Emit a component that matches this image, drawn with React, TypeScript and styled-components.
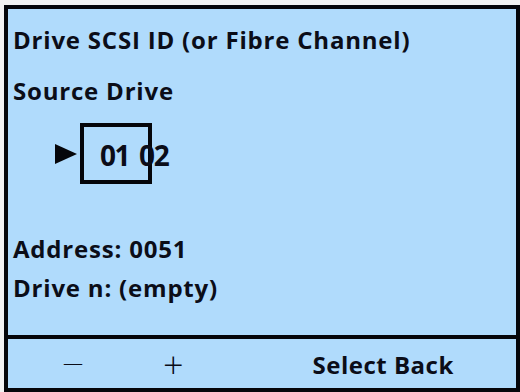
import styled, { createGlobalStyle } from 'styled-components';

const GlobalStyle = createGlobalStyle`
  html, body {
    margin: 0;
    padding: 0;
    background: #f2f2f2;
  }
  body {
    font-family: "Open Sans", Lato, sans-serif;
    color: #0b0d18;
  }
`;

const Screen = styled.div`
  margin: 5px 0 0 4px;
  width: 516px;
  height: 387px;
  box-sizing: border-box;
  border: 4px solid #05060a;
  background: #b0dbfc;
  display: flex;
  flex-direction: column;
`;

const Content = styled.div`
  flex: 1;
  padding: 17px 0 0 5px;
  display: flex;
  flex-direction: column;
  align-items: flex-start;
`;

const Line = styled.div<{ gap?: number }>`
  font-size: 24px;
  font-weight: 700;
  line-height: 28px;
  height: 28px;
  margin-top: ${({ gap }) => gap ?? 0}px;
  white-space: nowrap;
  letter-spacing: 0.8px;
`;

const Selector = styled.div`
  margin-top: 18px;
  padding-left: 42px;
  display: flex;
  align-items: center;
  gap: 3px;
`;

const Pointer = styled.svg`
  width: 22px;
  height: 20px;
  display: block;
`;

const ValueBox = styled.div`
  width: 72px;
  height: 61px;
  box-sizing: border-box;
  border: 4px solid #05060a;
  padding: 3px 0 0 16px;
  font-size: 28px;
  font-weight: 700;
  line-height: 50px;
  white-space: nowrap;
  letter-spacing: -1.4px;
  word-spacing: 4px;
`;

const Footer = styled.div`
  height: 53px;
  border-top: 4px solid #05060a;
  display: flex;
  align-items: flex-start;
  box-sizing: border-box;
`;

const SoftKey = styled.span<{ left: number; size: number; top: number; bold?: boolean }>`
  margin-left: ${({ left }) => left}px;
  padding-top: ${({ top }) => top}px;
  font-size: ${({ size }) => size}px;
  line-height: 1;
  font-weight: ${({ bold }) => (bold ? 700 : 300)};
  letter-spacing: ${({ bold }) => (bold ? 0.5 : 0)}px;
  white-space: nowrap;
`;

export default function App() {
  return (
    <>
      <GlobalStyle />
      <Screen>
        <Content>
          <Line>Drive SCSI ID (or Fibre Channel)</Line>
          <Line gap={23}>Source Drive</Line>
          <Selector>
            <Pointer viewBox="0 0 22 20">
              <path d="M0 0 L22 10 L0 20 Z" fill="#05060a" />
            </Pointer>
            <ValueBox>01 02</ValueBox>
          </Selector>
          <Line gap={51}>Address: 0051</Line>
          <Line gap={11}>Drive n: (empty)</Line>
        </Content>
        <Footer>
          <SoftKey left={55} size={20} top={14}>
            —
          </SoftKey>
          <SoftKey left={80} size={36} top={8}>
            +
          </SoftKey>
          <SoftKey left={129} size={24} top={14} bold>
            Select Back
          </SoftKey>
        </Footer>
      </Screen>
    </>
  );
}
